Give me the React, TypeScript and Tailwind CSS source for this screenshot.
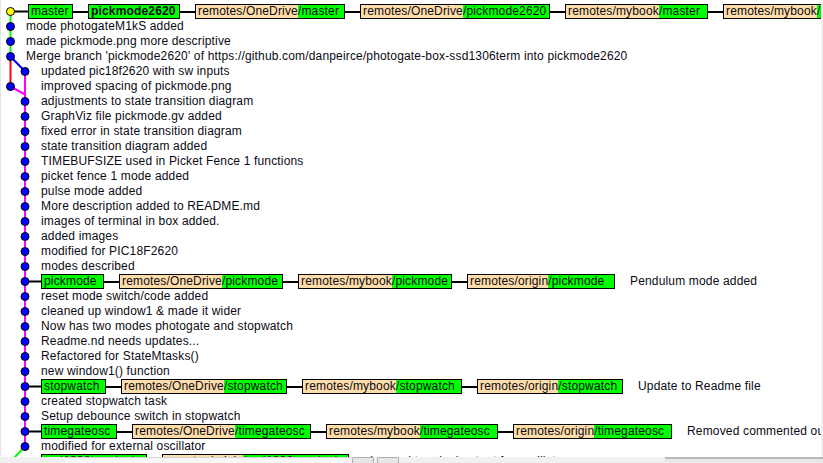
import React from "react";

type Label = {
  name: string;
  prefix?: string;
  w: string; // box width class
  bold?: boolean;
};

type Row = {
  col: number;
  pl: string;
  text?: string;
  labels?: Label[];
  head?: boolean;
};

const rows: Row[] = [
  {
    col: 0,
    pl: "pl-[27px]",
    head: true,
    labels: [
      { name: "master", w: "w-[45px]" },
      { name: "pickmode2620", w: "w-[92px]", bold: true },
      { prefix: "remotes/OneDrive", name: "/master", w: "w-[150px]" },
      { prefix: "remotes/OneDrive", name: "/pickmode2620", w: "w-[190px]" },
      { prefix: "remotes/mybook", name: "/master", w: "w-[143px]" },
      { prefix: "remotes/mybook", name: "/pickmode2620", w: "w-[182px]" },
    ],
  },
  { col: 0, pl: "pl-[25px]", text: "mode photogateM1kS added" },
  { col: 0, pl: "pl-[25px]", text: "made pickmode.png more descriptive" },
  {
    col: 0,
    pl: "pl-[25px]",
    text: "Merge branch 'pickmode2620' of https://github.com/danpeirce/photogate-box-ssd1306term into pickmode2620",
  },
  { col: 1, pl: "pl-[40px]", text: "updated pic18f2620 with sw inputs" },
  { col: 0, pl: "pl-[40px]", text: "improved spacing of pickmode.png" },
  { col: 1, pl: "pl-[40px]", text: "adjustments to state transition diagram" },
  { col: 1, pl: "pl-[40px]", text: "GraphViz file pickmode.gv added" },
  { col: 1, pl: "pl-[40px]", text: "fixed error in state transition diagram" },
  { col: 1, pl: "pl-[40px]", text: "state transition diagram added" },
  { col: 1, pl: "pl-[40px]", text: "TIMEBUFSIZE used in Picket Fence 1 functions" },
  { col: 1, pl: "pl-[40px]", text: "picket fence 1 mode added" },
  { col: 1, pl: "pl-[40px]", text: "pulse mode added" },
  { col: 1, pl: "pl-[40px]", text: "More description added to README.md" },
  { col: 1, pl: "pl-[40px]", text: "images of terminal in box added." },
  { col: 1, pl: "pl-[40px]", text: "added images" },
  { col: 1, pl: "pl-[40px]", text: "modified for PIC18F2620" },
  { col: 1, pl: "pl-[40px]", text: "modes described" },
  {
    col: 1,
    pl: "pl-[40px]",
    text: "Pendulum mode added",
    labels: [
      { name: "pickmode", w: "w-[63px]" },
      { prefix: "remotes/OneDrive", name: "/pickmode", w: "w-[164px]" },
      { prefix: "remotes/mybook", name: "/pickmode", w: "w-[154px]" },
      { prefix: "remotes/origin", name: "/pickmode", w: "w-[148px]" },
    ],
  },
  { col: 1, pl: "pl-[40px]", text: "reset mode switch/code added" },
  { col: 1, pl: "pl-[40px]", text: "cleaned up window1 & made it wider" },
  { col: 1, pl: "pl-[40px]", text: "Now has two modes photogate and stopwatch" },
  { col: 1, pl: "pl-[40px]", text: "Readme.nd needs updates..." },
  { col: 1, pl: "pl-[40px]", text: "Refactored for StateMtasks()" },
  { col: 1, pl: "pl-[40px]", text: "new window1() function" },
  {
    col: 1,
    pl: "pl-[40px]",
    text: "Update to Readme file",
    labels: [
      { name: "stopwatch", w: "w-[65px]" },
      { prefix: "remotes/OneDrive", name: "/stopwatch", w: "w-[166px]" },
      { prefix: "remotes/mybook", name: "/stopwatch", w: "w-[160px]" },
      { prefix: "remotes/origin", name: "/stopwatch", w: "w-[146px]" },
    ],
  },
  { col: 1, pl: "pl-[40px]", text: "created stopwatch task" },
  { col: 1, pl: "pl-[40px]", text: "Setup debounce switch in stopwatch" },
  {
    col: 1,
    pl: "pl-[40px]",
    text: "Removed commented out code",
    labels: [
      { name: "timegateosc", w: "w-[76px]" },
      { prefix: "remotes/OneDrive", name: "/timegateosc", w: "w-[179px]" },
      { prefix: "remotes/mybook", name: "/timegateosc", w: "w-[172px]" },
      { prefix: "remotes/origin", name: "/timegateosc", w: "w-[159px]" },
    ],
  },
  { col: 1, pl: "pl-[40px]", text: "modified for external oscillator" },
  {
    col: 1,
    pl: "pl-[40px]",
    text: "changed terminal output for oscillator",
    labels: [
      { name: "ssd1306terminal", w: "w-[106px]" },
      { prefix: "remotes/origin", name: "/ssd1306terminal", w: "w-[187px]" },
    ],
  },
];

// graph geometry (coords inside the list, which starts 1px right of the page edge)
const cy = (i: number) => 4 + 15 * i + 7.5;
const cx = (c: number) => (c === 0 ? 9.5 : 24);
const plPx = (pl: string) => parseInt(pl.replace(/\D/g, ""), 10);

function Graph() {
  return (
    <svg className="pointer-events-none absolute left-0 top-0" width="44" height="480">
      <path d={`M9.5 ${cy(0)} V${cy(3)}`} stroke="#00ff00" strokeWidth="2" fill="none" />
      <path d={`M9.5 ${cy(3)} V${cy(5)}`} stroke="#ff0000" strokeWidth="2" fill="none" />
      <path d={`M9.5 ${cy(3)} L24 ${cy(4)}`} stroke="#0000ff" strokeWidth="2" fill="none" />
      <path d={`M24 ${cy(4)} V${cy(29)}`} stroke="#ff00ff" strokeWidth="2" fill="none" />
      <path d={`M9.5 ${cy(5)} L24 ${cy(5) + 8}`} stroke="#ff00ff" strokeWidth="2" fill="none" />
      <path d={`M24 ${cy(29)} L9.5 ${cy(30)} V480`} stroke="#00ff00" strokeWidth="2" fill="none" />
      {rows.map((r, i) =>
        r.labels ? (
          <line
            key={`c${i}`}
            x1={cx(r.col)}
            y1={cy(i)}
            x2={plPx(r.pl)}
            y2={cy(i)}
            stroke="#000"
            strokeWidth="2"
          />
        ) : null,
      )}
      {rows.map((r, i) => (
        <circle
          key={i}
          cx={cx(r.col)}
          cy={cy(i)}
          r="4"
          fill={r.head ? "#ffff00" : "#0000ff"}
          stroke="#000"
          strokeWidth="1"
        />
      ))}
    </svg>
  );
}

function RefBox({ l }: { l: Label }) {
  return (
    <div
      className={`flex h-[15px] shrink-0 overflow-hidden border border-black leading-[13px] ${l.w} ${
        l.bold ? "font-bold" : ""
      }`}
    >
      {l.prefix && <span className="shrink-0 bg-[#ffddaa] pl-[2px]">{l.prefix}</span>}
      <span className={`flex-1 bg-[#00ff00] ${l.prefix ? "" : "pl-[2px]"}`}>{l.name}</span>
    </div>
  );
}

function CommitRow({ r }: { r: Row }) {
  return (
    <div className={`flex h-[15px] items-center whitespace-nowrap leading-[15px] ${r.pl}`}>
      {r.labels?.map((l, j) => (
        <React.Fragment key={j}>
          {j > 0 && <div className="h-[2px] w-[15px] shrink-0 bg-black" />}
          <RefBox l={l} />
        </React.Fragment>
      ))}
      {r.text && <span className={r.labels ? "ml-[15px]" : ""}>{r.text}</span>}
    </div>
  );
}

export default function App() {
  return (
    <div className="flex h-[463px] w-[823px] flex-col overflow-hidden bg-white font-['Liberation_Sans',Arial,sans-serif] text-[12px] tracking-[0.16px] text-[#0a0a14]">
      <div className="flex h-[457px] shrink-0">
        <div className="relative h-[457px] w-[821px] overflow-hidden border-l border-[#e6e6e6] bg-white">
          <Graph />
          <div className="pt-[4px]">
            {rows.map((r, i) => (
              <CommitRow key={i} r={r} />
            ))}
          </div>
        </div>
        <div className="h-full w-[2px] bg-[#f0f0f0]" />
      </div>
      {/* bottom edge of the pane (scrollbar / lower panel) */}
      <div className="flex h-[6px] shrink-0 bg-[#f0f0f0]">
        <div className="w-[65px]" />
        <div className="w-[286px] border-t border-[#d4d4d4] bg-[#f7f7f7]" />
        <div className="ml-[1px] w-[22px] rounded-t-[2px] border border-b-0 border-[#adadad] bg-[#e5e5e5]" />
        <div className="ml-[3px] w-[22px] rounded-t-[2px] border border-b-0 border-[#adadad] bg-[#e5e5e5]" />
        <div className="flex-1" />
        <div className="w-[158px] border-t-2 border-[#b9b9b9] bg-[#e8e8e8]" />
      </div>
    </div>
  );
}
